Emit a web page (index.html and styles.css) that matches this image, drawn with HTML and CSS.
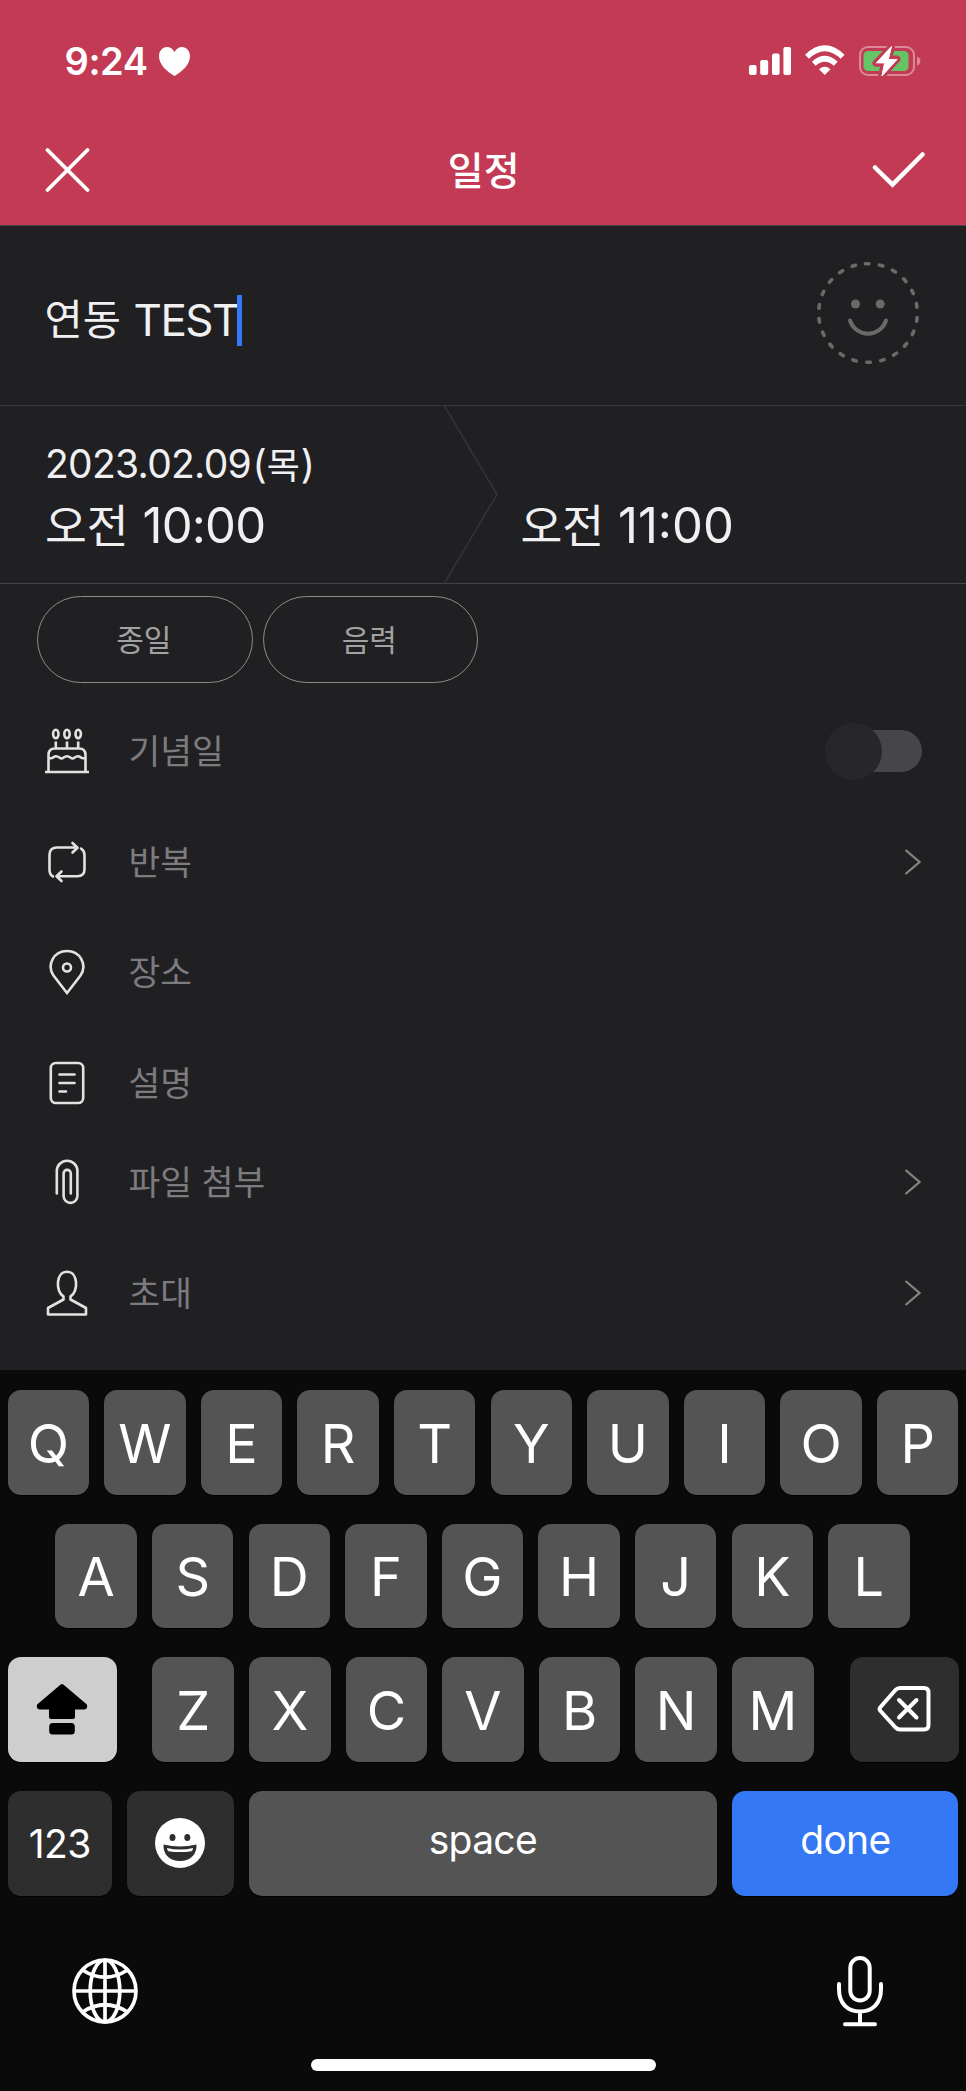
FILE: index.html
```
<!DOCTYPE html>
<html lang="ko">
<head>
<meta charset="utf-8">
<title>일정</title>
<link rel="stylesheet" href="styles.css">
</head>
<body>
<div class="screen">
  <header class="header">
    <div class="status">
      <span class="clock">9:24</span>
      <svg class="heart" viewBox="0 0 31 29" width="31" height="29"><path fill="#fff" d="M15.500 5C13.500 1.500 11 0 8 0C3.500 0 0 4 0 9C0 18 8 24.500 15.500 29C23 24.500 31 18 31 9C31 4 27.500 0 23 0C20 0 17.500 1.500 15.500 5Z"/></svg>
      <svg class="signals" viewBox="0 0 174 32" width="174" height="32">
        <g fill="#fff">
          <rect x="1" y="20" width="7.600" height="10" rx="2"/><rect x="12.200" y="15" width="8" height="15" rx="2"/><rect x="24" y="8.500" width="7.600" height="21.500" rx="2"/><rect x="35.400" y="2" width="7.600" height="28" rx="2"/>
          <path d="M76.800 30L82.500 24.200Q76.800 19.500 71 24.200Z"/>
        </g>
        <path fill="none" stroke="#fff" stroke-width="5.600" d="M59 11.800Q76.800-5.200 94.600 11.800M65.800 18.800Q76.800 8.700 87.800 18.800"/>
        <rect x="112" y="2" width="54" height="28" rx="8" fill="none" stroke="#db8998" stroke-width="2"/>
        <path fill="#db8998" d="M169 11.500C173.500 13 173.500 19 169 20.500Z"/>
        <rect x="115.500" y="6" width="45" height="20" rx="4.500" fill="#65c466"/>
        <path fill="#fff" stroke="#c33a54" stroke-width="7" paint-order="stroke" stroke-linejoin="round" d="M143.500 2L128 18.200H136.500L133.500 31L149 14H140.500Z"/>
        <path fill="#fff" stroke="#fff" stroke-linejoin="round" d="M143.500 1.500L128.500 17.700H136.700L134 31L149 14.500H140.300Z"/>
      </svg>
    </div>
    <div class="nav">
      <svg viewBox="0 0 46 46" width="46" height="46"><path class="nav-line" d="M2.500 3L42.500 43M42.500 3L2.500 43"/></svg>
      <h1 class="nav-title">일정</h1>
      <svg viewBox="0 0 54 38" width="54" height="38"><path class="nav-line thick" d="M4 16.500L21.500 33.500L51.500 3.500"/></svg>
    </div>
  </header>

  <section class="subject">
    <div class="subject-text"><span class="ko">연동</span><span class="la">TEST</span><i class="caret"></i></div>
    <svg class="smiley" viewBox="0 0 104 104" width="104" height="104">
      <circle cx="52" cy="52" r="49.300" fill="none" stroke="#6a6a6a" stroke-width="3.600" stroke-linecap="round" stroke-dasharray="3.600 10.480" transform="rotate(-93 52 52)"/>
      <circle cx="39.500" cy="43" r="4.500" fill="#6a6a6a"/><circle cx="64.200" cy="43" r="4.500" fill="#6a6a6a"/>
      <path d="M34 59.500C40 77 64 77 70 59.500" fill="none" stroke="#6a6a6a" stroke-width="4" stroke-linecap="round"/>
    </svg>
  </section>

  <section class="period">
    <div class="start">
      <div class="date"><span class="la">2023.02.09</span><span class="paren">(</span><span class="ko">목</span><span class="paren">)</span></div>
      <div class="time"><span class="ko">오전</span><span class="la">10:00</span></div>
    </div>
    <svg class="divider" viewBox="0 0 54 177" width="54" height="177"><path d="M.5 0L53 88.500L.5 177" fill="none" stroke="#353537" stroke-width="1.500"/></svg>
    <div class="end"><div class="time"><span class="ko">오전</span><span class="la eleven">11:00</span></div></div>
  </section>

  <div class="pills"><span class="pill">종일</span><span class="pill">음력</span></div>

  <ul class="options">
    <li class="row">
      <svg class="icon" viewBox="0 0 44 46" width="44" height="46"><g class="line"><ellipse cx="10.800" cy="6" rx="2.700" ry="4.300"/><ellipse cx="22" cy="6" rx="2.700" ry="4.300"/><ellipse cx="33.200" cy="6" rx="2.700" ry="4.300"/><path d="M10.800 13.500V20M22 13.500V20M33.200 13.500V20M0 44H44M3.500 44V27Q3.500 20.500 10 20.500H34Q40.500 20.500 40.500 27V44M3.500 29.500C7.500 32 8 28.300 11 28.300S14.500 30.500 16.500 30.500S19 28.300 22 28.300S25.500 30.500 27.500 30.500S30 28.300 33 28.300S36.500 32 40.500 29.500"/></g></svg>
      <span class="label">기념일</span><span class="toggle"></span>
    </li>
    <li class="row">
      <svg class="icon" viewBox="0 0 44 46" width="44" height="46"><g class="line round"><path d="M8 37.500Q4.500 35.500 4.500 31V16Q4.500 8.500 12 8.500H32M27.500 4L32.500 8.800L27.500 13.500M36 9.500Q39.500 12 39.500 16V30Q39.500 37.200 32.500 37.200H11.500M16.500 32.500L11.500 37.300L16.500 42"/></g></svg>
      <span class="label">반복</span><svg class="chevron" viewBox="0 0 17 26" width="17" height="26"><path d="M1.500 1L15.500 13L1.500 25"/></svg>
    </li>
    <li class="row">
      <svg class="icon" viewBox="0 0 44 46" width="44" height="46"><g class="line"><path d="M22 43.500L8.500 26C1.500 15.500 8.500 1.500 22 1.500S42.500 15.500 35.500 26Z" transform="translate(0 .5)"/><circle cx="22" cy="18.500" r="4"/></g></svg>
      <span class="label">장소</span>
    </li>
    <li class="row">
      <svg class="icon" viewBox="0 0 44 46" width="44" height="46"><g class="line round"><rect x="5.800" y="3" width="32.400" height="40" rx="5"/><path d="M14.500 14.500H29.500M14.500 23H29.500M14.500 31.500H21"/></g></svg>
      <span class="label">설명</span>
    </li>
    <li class="row short">
      <svg class="icon" viewBox="0 0 44 46" width="44" height="46"><g class="line round"><path d="M11.800 34.500V12A10.300 10.300 0 0 1 32.400 12V37A6.800 6.800 0 0 1 18.600 37V14.500A3.600 3.600 0 0 1 25.800 14.500V34.500"/></g></svg>
      <span class="label">파일 첨부</span><svg class="chevron" viewBox="0 0 17 26" width="17" height="26"><path d="M1.500 1L15.500 13L1.500 25"/></svg>
    </li>
    <li class="row last">
      <svg class="icon" viewBox="0 0 44 46" width="44" height="46"><g class="line"><path d="M18.500 29.500V26.500C10.500 22 10.500 1.800 22 1.800S33.500 22 25.500 26.500V29.500L41 38V44.500H3V38Z" stroke-linejoin="round"/></g></svg>
      <span class="label">초대</span><svg class="chevron" viewBox="0 0 17 26" width="17" height="26"><path d="M1.500 1L15.500 13L1.500 25"/></svg>
    </li>
  </ul>

  <section class="keyboard">
    <div class="keys"><b class="key">Q</b><b class="key">W</b><b class="key">E</b><b class="key">R</b><b class="key">T</b><b class="key">Y</b><b class="key">U</b><b class="key">I</b><b class="key">O</b><b class="key">P</b></div>
    <div class="keys middle"><b class="key">A</b><b class="key">S</b><b class="key">D</b><b class="key">F</b><b class="key">G</b><b class="key">H</b><b class="key">J</b><b class="key">K</b><b class="key">L</b></div>
    <div class="keys spread">
      <b class="key shift"><svg viewBox="0 0 52 52" width="52" height="52"><path stroke="#000" stroke-width="4" stroke-linejoin="round" d="M26 3L49 22.500Q50 24.500 47.500 24.500H37V34H15V24.500H4.500Q2 24.500 3 22.500Z"/><rect x="13.200" y="40" width="25.600" height="11.500" rx="3.500"/></svg></b>
      <div class="keys"><b class="key">Z</b><b class="key">X</b><b class="key">C</b><b class="key">V</b><b class="key">B</b><b class="key">N</b><b class="key">M</b></div>
      <b class="key dark delete"><svg viewBox="0 0 54 46" width="54" height="46"><g fill="none" stroke="#fff" stroke-width="4" stroke-linecap="round" stroke-linejoin="round"><path d="M23 2H47Q51.500 2 51.500 6.500V39Q51.500 43.500 47 43.500H23Q20.500 43.500 18.500 41.500L3.500 25Q1.700 23 3.500 21L18.500 4Q20.500 2 23 2Z"/><path d="M22 14L39.500 31.500M39.500 14L22 31.500"/></g></svg></b>
    </div>
    <div class="keys">
      <b class="key dark numbers">123</b>
      <b class="key dark emoji"><svg viewBox="0 0 50 50" width="50" height="50"><circle cx="25" cy="25" r="25" fill="#fff"/><g fill="#2e2e2e"><ellipse cx="17.500" cy="19.500" rx="3" ry="3.600"/><ellipse cx="32.300" cy="19.500" rx="3" ry="3.600"/><path d="M8.500 26.500Q25 30.500 41.500 26.500C42 36 36 43 25 43S8 36 8.500 26.500Z"/></g><path fill="#fff" d="M12 30Q25 33 38 30Q38 32.500 36.500 33.200Q25 35 13.500 33.200Q12 32.500 12 30Z"/></svg></b>
      <b class="key space">space</b>
      <b class="key done">done</b>
    </div>
    <div class="tools">
      <svg viewBox="0 0 68 68" width="68" height="68"><g fill="none" stroke="#fff" stroke-width="3.700"><circle cx="34" cy="34" r="31"/><ellipse cx="34" cy="34" rx="14.800" ry="31"/><path d="M34 3V65M3 34H65M11.500 13Q34 27.500 56.500 13M11.500 55Q34 40.500 56.500 55"/></g></svg>
      <svg viewBox="0 0 48 72" width="48" height="72"><g fill="none" stroke="#fff" stroke-width="4" stroke-linecap="round"><rect x="14.300" y="3" width="19.400" height="42.500" rx="9.700"/><path d="M3 29V34C3 49 12 56.500 24 56.500S45 49 45 34V29M24 57V69M9 69.200H39"/></g></svg>
    </div>
    <div class="home"></div>
  </section>
</div>
</body>
</html>
```
FILE: styles.css
```
* { box-sizing: border-box; }
body { margin: 0; background: #0a0a0a; font-family: Inter, "Noto Sans CJK KR", sans-serif; }
svg { display: block; flex: none; }
.screen { width: 966px; height: 2091px; background: #202022; color: #f0f0f2; display: flex; flex-direction: column; overflow: hidden; }
.ko, .label, .pill, .nav-title { font-family: "Noto Sans CJK KR", sans-serif; }

.header { height: 226px; background: #c33a54; border-bottom: 1px solid #4b4146; color: #fff; }
.status { height: 122px; padding: 0 44px 0 64.500px; display: flex; align-items: center; }
.clock { font-size: 38px; font-weight: 600; line-height: 46px; width: 94.500px; letter-spacing: -.4px; white-space: nowrap; }
.signals { margin-left: auto; }
.nav { height: 96px; padding: 0 41px 0 44.500px; display: flex; align-items: center; justify-content: space-between; }
.nav-title { margin: 0 0 4px 6px; font-size: 39px; font-weight: 500; line-height: 50px; }
.nav-line { fill: none; stroke: #fff; stroke-width: 3.800; stroke-linecap: round; }
.thick { stroke-width: 4.500; }

.subject { height: 180px; border-bottom: 1px solid #38383a; padding: 0 46px 0 44.500px; display: flex; justify-content: space-between; align-items: center; }
.subject-text { display: flex; align-items: center; font-size: 44px; line-height: 52px; margin-top: 9px; }
.subject-text .ko { font-size: 41.500px; width: 89px; padding-bottom: 6px; }
.subject-text .la { letter-spacing: -1.500px; width: 103.500px; white-space: nowrap; }
.caret { width: 5px; height: 51px; background: #3478f6; }
.smiley { margin-top: -6px; }

.period { height: 178px; border-bottom: 1px solid #444446; display: flex; }
.start { width: 444px; padding: 31px 0 0 45px; }
.date { height: 54px; display: flex; align-items: center; font-size: 39px; line-height: 54px; }
.date .la { width: 207.500px; letter-spacing: -.7px; }
.date .ko { font-size: 36px; width: 34px; padding-bottom: 3px; }
.time { height: 66px; display: flex; align-items: center; font-size: 49px; line-height: 66px; padding-top: 3px; }
.time .ko { font-size: 45.500px; width: 97.500px; padding-bottom: 6px; }
.time .la { letter-spacing: -.8px; }
.time .eleven { letter-spacing: 0; }
.end { padding: 85px 0 0 22.500px; }

.pills { display: flex; gap: 10px; padding: 12px 37px 0; height: 111px; }
.pill { width: 215.500px; height: 87px; border: 1px solid #8c8c8c; border-radius: 44px; color: #a2a2a2; font-size: 30px; line-height: 82px; text-align: center; padding-right: 2px; }

.options { list-style: none; margin: 0; padding: 1px 44px 0 45px; height: 675px; }
.row { display: flex; align-items: center; height: 110.500px; }
.row.short { height: 88.500px; }
.row.last { height: 133px; }
.icon { margin-right: 39.500px; }
.line { fill: none; stroke: #e2e2e2; stroke-width: 2.600; }
.round { stroke-linecap: round; stroke-linejoin: round; }
.label { color: #7b7b80; font-size: 34.500px; line-height: 50px; padding-bottom: 4px; }
.chevron { margin-left: auto; margin-right: 1px; }
.chevron path { fill: none; stroke: #858585; stroke-width: 2.200; }
.toggle { position: relative; margin-left: auto; width: 97px; height: 42px; border-radius: 21px; background: linear-gradient(90deg, transparent 35%, #464649 35%); }
.toggle::before { content: ""; position: absolute; left: 0; top: -7.500px; width: 57px; height: 57px; border-radius: 50%; background: #27272b; }

.keyboard { height: 721px; background: #0a0a0a; padding: 20px 7.500px 0; color: #fff; }
.keys { display: flex; justify-content: center; gap: 15.100px; height: 104.500px; }
.keyboard > .keys { margin-bottom: 29.200px; }
.middle { padding-right: 1px; }
.spread { justify-content: space-between; }
.key { width: 81.500px; height: 104.500px; border-radius: 13px; background: #545454; display: flex; align-items: center; justify-content: center; font-weight: 400; font-size: 54px; line-height: 60px; padding-top: 3px; flex: none; box-shadow: 0 1px 1px #000; }
.shift { width: 109px; background: #cecece; }
.dark { background: #2e2e2e; }
.delete { width: 109px; }
.numbers { width: 104.600px; font-size: 39px; letter-spacing: -.5px; padding-top: 1px; }
.emoji { width: 106.300px; padding-top: 0; }
.space { width: 468.500px; }
.done { width: 226.300px; background: #3478f6; }
.space, .done { font-size: 39px; padding-top: 1px; padding-bottom: 7px; letter-spacing: -.7px; }
.shift, .delete { padding-bottom: 1px; padding-top: 0; }
.tools { display: flex; justify-content: space-between; padding: 0 74.500px 0 63.500px; align-items: center; height: 72px; margin-top: 59px; }
.home { width: 345px; height: 12.500px; border-radius: 7px; background: #fff; margin: 32px auto 0; }
```
